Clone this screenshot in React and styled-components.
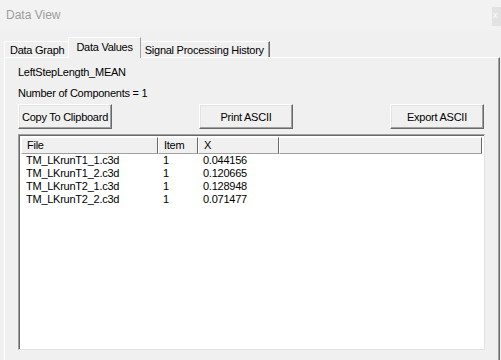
import styled, { createGlobalStyle } from "styled-components";

const GlobalStyle = createGlobalStyle`
  html, body {
    margin: 0;
    padding: 0;
    background: #f0f0f0;
  }
  body {
    font-family: "Liberation Sans", Arial, sans-serif;
    font-size: 11px;
    letter-spacing: -0.25px;
    color: #000;
  }
`;

const Window = styled.div`
  width: 501px;
  height: 360px;
  overflow: hidden;
  display: flex;
  flex-direction: column;
  background: #f0f0f0;
`;

const TitleBar = styled.div`
  height: 30px;
  display: flex;
  align-items: flex-start;
  background: #f2f2f2;
`;

const Title = styled.span`
  margin: 8px 0 0 6px;
  font-size: 12px;
  letter-spacing: 0;
  color: #9d9d9d;
`;

const CloseBox = styled.div`
  margin: 7px 0 0 auto;
  width: 9px;
  height: 19px;
  box-sizing: border-box;
  background: #e2e2e2;
  color: #fff;
  font-size: 9px;
  line-height: 17px;
  padding-left: 1px;
  overflow: hidden;
`;

const TabStrip = styled.div`
  display: flex;
  align-items: flex-end;
  height: 20px;
  margin-top: 7px;
  padding-left: 4px;
  position: relative;
  z-index: 1;
`;

const Tab = styled.div`
  height: ${(p) => (p.$active ? "21px" : "16px")};
  box-sizing: border-box;
  padding: ${(p) => (p.$active ? "2px 7px 0 7px" : "1px 5px 0 5px")};
  margin: ${(p) => (p.$active ? "0 -2px -1px -2px" : "0")};
  background: #f0f0f0;
  border-top: 1px solid #fff;
  border-left: 1px solid #fff;
  border-right: 1px solid ${(p) => (p.$last ? "#6a6a6a" : "#a0a0a0")};
  box-shadow: ${(p) => (p.$last ? "inset -1px 0 0 #a0a0a0" : "none")};
  position: relative;
  z-index: ${(p) => (p.$active ? 2 : 0)};
  line-height: 14px;
  white-space: nowrap;
`;

const Panel = styled.div`
  flex: 1;
  margin: 0 1px 0 4px;
  border-top: 1px solid #fff;
  border-left: 1px solid #fff;
  border-right: 1px solid #6a6a6a;
  box-shadow: inset -1px 0 0 #a0a0a0;
  padding: 8px 13px 0 13px;
  display: flex;
  flex-direction: column;
`;

const Label = styled.div`
  height: 13px;
  line-height: 13px;
  margin-bottom: ${(p) => p.$gap || 0}px;
`;

const ButtonRow = styled.div`
  display: flex;
  margin-top: 4px;
`;

const Button = styled.button`
  width: 94px;
  height: 25px;
  margin-left: ${(p) => p.$offset || 0}px;
  padding: 0;
  background: #f0f0f0;
  border: 1px solid;
  border-color: #fff #696969 #696969 #fff;
  box-shadow: inset -1px -1px 0 #a0a0a0, inset 1px 1px 0 #e3e3e3;
  font-family: "Liberation Sans", Arial, sans-serif;
  font-size: 11px;
  letter-spacing: -0.25px;
  white-space: nowrap;
  color: #000;
`;

const ListView = styled.div`
  margin-top: 5px;
  width: 467px;
  height: 216px;
  box-sizing: border-box;
  background: #fff;
  border: 1px solid;
  border-color: #a0a0a0 #e3e3e3 #e3e3e3 #a0a0a0;
  box-shadow: inset 1px 1px 0 #696969;
  padding: 2px 2px 0 2px;
`;

const HeaderRow = styled.div`
  display: flex;
  height: 17px;
`;

const HeaderCell = styled.div`
  box-sizing: border-box;
  width: ${(p) => (p.$w ? `${p.$w}px` : "auto")};
  flex: ${(p) => (p.$w ? "none" : 1)};
  background: #f0f0f0;
  border: 1px solid;
  border-color: #fff #696969 #a0a0a0 #fff;
  padding-left: 5px;
  line-height: 15px;
`;

const Row = styled.div`
  display: flex;
  height: 13px;
  line-height: 13px;
  &:first-of-type {
    margin-top: 4px;
  }
`;

const Cell = styled.div`
  width: ${(p) => p.$w}px;
  padding-left: 5px;
  box-sizing: border-box;
  white-space: nowrap;
`;

const columns = [
  { name: "File", w: 137 },
  { name: "Item", w: 40 },
  { name: "X", w: 81 },
];

const rows = [
  ["TM_LKrunT1_1.c3d", "1", "0.044156"],
  ["TM_LKrunT1_2.c3d", "1", "0.120665"],
  ["TM_LKrunT2_1.c3d", "1", "0.128948"],
  ["TM_LKrunT2_2.c3d", "1", "0.071477"],
];

export default function App() {
  return (
    <Window>
      <GlobalStyle />
      <TitleBar>
        <Title>Data View</Title>
        <CloseBox>x</CloseBox>
      </TitleBar>

      <TabStrip>
        <Tab>Data Graph</Tab>
        <Tab $active>Data Values</Tab>
        <Tab $last>Signal Processing History</Tab>
      </TabStrip>

      <Panel>
        <Label $gap={8}>LeftStepLength_MEAN</Label>
        <Label>Number of Components = 1</Label>

        <ButtonRow>
          <Button>Copy To Clipboard</Button>
          <Button $offset={87}>Print ASCII</Button>
          <Button $offset={97}>Export ASCII</Button>
        </ButtonRow>

        <ListView>
          <HeaderRow>
            {columns.map((c) => (
              <HeaderCell key={c.name} $w={c.w}>
                {c.name}
              </HeaderCell>
            ))}
            <HeaderCell />
          </HeaderRow>
          {rows.map((r) => (
            <Row key={r[0]}>
              {r.map((v, i) => (
                <Cell key={i} $w={columns[i].w}>
                  {v}
                </Cell>
              ))}
            </Row>
          ))}
        </ListView>
      </Panel>
    </Window>
  );
}
